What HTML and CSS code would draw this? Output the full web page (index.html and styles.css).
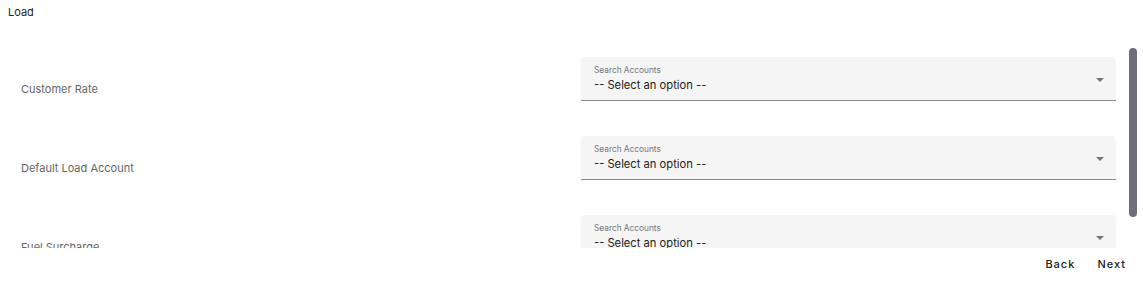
FILE: index.html
```html
<!DOCTYPE html>
<html lang="en">
<head>
    <meta charset="UTF-8">
    <title>Load Accounts</title>
    <link rel="stylesheet" href="styles.css">
</head>
<body>
    <div class="page-title">Load</div>

    <div class="settings-wrap">
        <div class="settings-scroll">
            <div class="setting-row">
                <div class="setting-label">Customer Rate</div>
                <div class="select-field">
                    <span class="field-label">Search Accounts</span>
                    <span class="field-value">-- Select an option --</span>
                    <span class="field-arrow"></span>
                </div>
            </div>
            <div class="setting-row">
                <div class="setting-label">Default Load Account</div>
                <div class="select-field">
                    <span class="field-label">Search Accounts</span>
                    <span class="field-value">-- Select an option --</span>
                    <span class="field-arrow"></span>
                </div>
            </div>
            <div class="setting-row">
                <div class="setting-label">Fuel Surcharge</div>
                <div class="select-field">
                    <span class="field-label">Search Accounts</span>
                    <span class="field-value">-- Select an option --</span>
                    <span class="field-arrow"></span>
                </div>
            </div>
        </div>
        <!-- scrollbar thumb, drawn since headless hides native ones -->
        <div class="scroll-thumb"></div>
    </div>

    <div class="wizard-actions">
        <button class="text-btn">Back</button>
        <button class="text-btn">Next</button>
    </div>
</body>
</html>
```

FILE: styles.css
```css
* {
    box-sizing: border-box;
    margin: 0;
    padding: 0;
}

body {
    font-family: Inter, "Noto Sans", sans-serif;
    background-color: #fff;
    color: #222;
    width: 1143px;
    height: 282px;
    overflow: hidden;
}

.page-title {
    font-size: 11px;
    line-height: 14px;
    padding: 5px 8px 0;
    height: 48px;
    color: #222;
}

.settings-wrap {
    position: relative;
    width: 1137px;
    height: 200px;
}

.settings-scroll {
    height: 200px;
    overflow: hidden;
}

.scroll-thumb {
    position: absolute;
    top: 0;
    right: 0;
    width: 8px;
    height: 169px;
    background-color: #6e6d79;
    border-radius: 4px;
}

.setting-row {
    display: grid;
    grid-template-columns: 560px 1fr;
    height: 79px;
    padding: 9px 21px 0 21px;
}

.setting-label {
    font-size: 11px;
    line-height: 14px;
    color: #666;
    padding-top: 25px;
}

.select-field {
    position: relative;
    height: 44px;
    background-color: #f5f5f5;
    border-bottom: 1px solid #8a8a8a;
    border-radius: 4px 4px 0 0;
    padding: 8px 13px 0;
    display: flex;
    flex-direction: column;
}

.field-label {
    font-size: 8.3px;
    line-height: 10px;
    color: #777;
}

.field-value {
    font-size: 11.2px;
    line-height: 16px;
    margin-top: 2px;
    color: #222;
}

.field-arrow {
    position: absolute;
    right: 12px;
    top: 21px;
    width: 0;
    height: 0;
    border-left: 4px solid transparent;
    border-right: 4px solid transparent;
    border-top: 4px solid #757575;
}

.wizard-actions {
    display: flex;
    justify-content: flex-end;
    gap: 22px;
    padding: 9px 17px 0 0;
}

.text-btn {
    background: none;
    border: none;
    font-family: Inter, "Noto Sans", sans-serif;
    font-size: 11px;
    font-weight: 500;
    letter-spacing: 1px;
    line-height: 14px;
    color: #222;
    cursor: pointer;
}
```
